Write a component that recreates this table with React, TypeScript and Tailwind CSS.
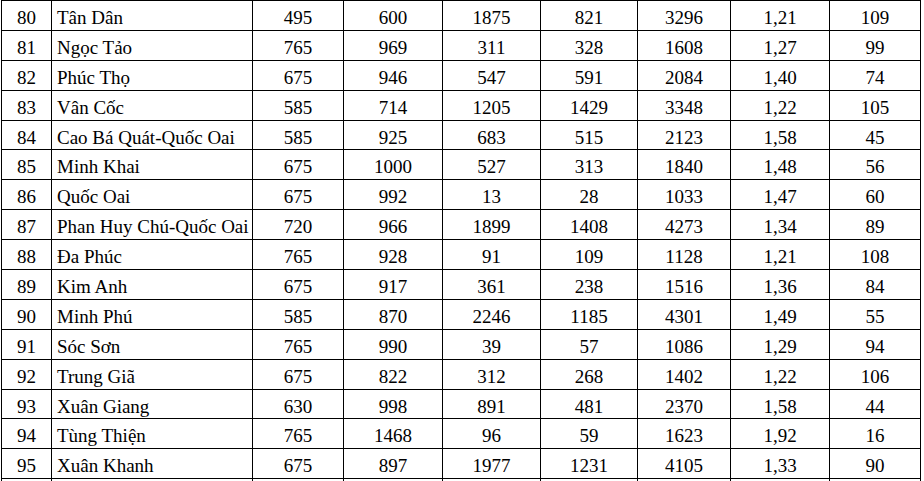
import React from "react";

const rows: (string | number)[][] = [
  [80, "Tân Dân", 495, 600, 1875, 821, 3296, "1,21", 109],
  [81, "Ngọc Tảo", 765, 969, 311, 328, 1608, "1,27", 99],
  [82, "Phúc Thọ", 675, 946, 547, 591, 2084, "1,40", 74],
  [83, "Vân Cốc", 585, 714, 1205, 1429, 3348, "1,22", 105],
  [84, "Cao Bá Quát-Quốc Oai", 585, 925, 683, 515, 2123, "1,58", 45],
  [85, "Minh Khai", 675, 1000, 527, 313, 1840, "1,48", 56],
  [86, "Quốc Oai", 675, 992, 13, 28, 1033, "1,47", 60],
  [87, "Phan Huy Chú-Quốc Oai", 720, 966, 1899, 1408, 4273, "1,34", 89],
  [88, "Đa Phúc", 765, 928, 91, 109, 1128, "1,21", 108],
  [89, "Kim Anh", 675, 917, 361, 238, 1516, "1,36", 84],
  [90, "Minh Phú", 585, 870, 2246, 1185, 4301, "1,49", 55],
  [91, "Sóc Sơn", 765, 990, 39, 57, 1086, "1,29", 94],
  [92, "Trung Giã", 675, 822, 312, 268, 1402, "1,22", 106],
  [93, "Xuân Giang", 630, 998, 891, 481, 2370, "1,58", 44],
  [94, "Tùng Thiện", 765, 1468, 96, 59, 1623, "1,92", 16],
  [95, "Xuân Khanh", 675, 897, 1977, 1231, 4105, "1,33", 90],
  ["", "", "", "", "", "", "", "", ""],
];

const widths = [50, 201, 91, 99, 98, 97, 93, 99, 91];

export default function App() {
  return (
    <div
      className="w-[924px] h-[481px] overflow-hidden bg-white text-black"
      style={{ fontFamily: '"Liberation Serif", "Times New Roman", serif' }}
    >
      <table className="ml-px border-collapse table-fixed w-[920px] text-[19px]">
        <colgroup>
          {widths.map((w, i) => (
            <col key={i} style={{ width: w }} />
          ))}
        </colgroup>
        <tbody>
          {rows.map((r, ri) => (
            <tr key={ri} className="h-[29.9px]">
              {r.map((c, ci) => (
                <td
                  key={ci}
                  className={
                    "border border-black p-0 align-top h-[29.9px] " +
                    (ci === 1 ? "text-left" : "text-center")
                  }
                >
                  <div
                    className={
                      "leading-[19px] pt-[7px] whitespace-nowrap " +
                      (ci === 1 ? "pl-[5px]" : "")
                    }
                  >
                    {c}
                  </div>
                </td>
              ))}
            </tr>
          ))}
        </tbody>
      </table>
    </div>
  );
}
